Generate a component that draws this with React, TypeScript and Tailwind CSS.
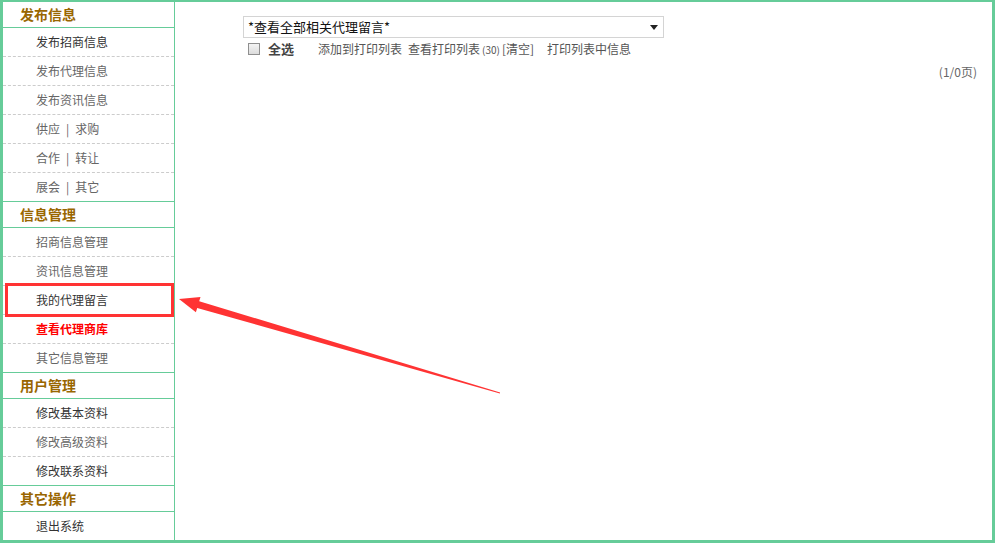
import React from "react";

const font = { fontFamily: '"Noto Sans CJK SC", "Liberation Sans", sans-serif' };

type Item = { label: React.ReactNode; tone: "dark" | "gray" | "red"; boxed?: boolean };
type Section = { title: string; items: Item[] };

const sections: Section[] = [
  {
    title: "发布信息",
    items: [
      { label: "发布招商信息", tone: "dark" },
      { label: "发布代理信息", tone: "gray" },
      { label: "发布资讯信息", tone: "gray" },
      { label: <>供应<span className="mx-[6px]">|</span>求购</>, tone: "gray" },
      { label: <>合作<span className="mx-[6px]">|</span>转让</>, tone: "gray" },
      { label: <>展会<span className="mx-[6px]">|</span>其它</>, tone: "gray" },
    ],
  },
  {
    title: "信息管理",
    items: [
      { label: "招商信息管理", tone: "gray" },
      { label: "资讯信息管理", tone: "gray" },
      { label: "我的代理留言", tone: "dark", boxed: true },
      { label: "查看代理商库", tone: "red" },
      { label: "其它信息管理", tone: "gray" },
    ],
  },
  {
    title: "用户管理",
    items: [
      { label: "修改基本资料", tone: "dark" },
      { label: "修改高级资料", tone: "gray" },
      { label: "修改联系资料", tone: "dark" },
    ],
  },
  {
    title: "其它操作",
    items: [{ label: "退出系统", tone: "dark" }],
  },
];

const toneClass = {
  dark: "text-[#333333]",
  gray: "text-[#666666]",
  red: "text-[#ff0000] font-bold",
};

export default function App() {
  return (
    <div className="relative w-[997px] h-[543px] bg-white overflow-hidden" style={font}>
      <div className="flex w-[995px] h-[543px] border-t-2 border-l-[3px] border-r-[3px] border-b-[3px] border-[#66cc99]">
        <aside className="w-[172px] shrink-0 border-r border-[#66cc99] flex flex-col">
          {sections.map((s, si) => (
            <div key={si} className="flex flex-col">
              <div
                className={`flex items-center pl-[17px] text-[14px] font-bold text-[#996600] border-b border-[#66cc99] ${
                  si > 0 ? "border-t h-[27px]" : "h-[26px]"
                }`}
              >
                {s.title}
              </div>
              {s.items.map((it, ii) => {
                const last = ii === s.items.length - 1;
                return (
                  <div
                    key={ii}
                    className={`relative flex items-center pl-[33px] text-[12px] ${toneClass[it.tone]} ${
                      last ? "h-[28px]" : "h-[29px] border-b border-dashed border-[#cccccc]"
                    }`}
                  >
                    {it.label}
                    {it.boxed && (
                      <div className="absolute left-[2px] top-[-3px] w-[169px] h-[34px] border-[3px] border-[#ff3333]" />
                    )}
                  </div>
                );
              })}
            </div>
          ))}
        </aside>
        <main className="flex-1 flex flex-col pt-[14px] pl-[68px] pr-[15px] text-[12px] text-[#333333]">
          <div className="w-[421px] h-[22px] border border-[#d4d4d4] flex items-center justify-between pl-[4px] pr-[4px] text-[13px] text-[#111111]">
            <span>*查看全部相关代理留言*</span>
            <svg width="8" height="5" viewBox="0 0 8 5" className="mr-[1px]">
              <polygon points="0,0 8,0 4,5" fill="#222" />
            </svg>
          </div>
          <div className="flex items-center h-[20px] mt-[1px] text-[#555555]">
            <span className="ml-[5px] w-[12px] h-[12px] border border-[#8f8f8f] bg-gradient-to-b from-[#f4f4f4] to-[#dcdcdc]" />
            <span className="ml-[8px] text-[13px] font-bold text-[#444444]">全选</span>
            <span className="ml-[24px]">添加到打印列表</span>
            <span className="ml-[6px]">查看打印列表</span>
            <span className="ml-[2px] text-[10px]">(30)</span>
            <span className="ml-[2px]">[清空]</span>
            <span className="ml-[13px]">打印列表中信息</span>
          </div>
          <div className="flex justify-end mt-[4px] text-[#666666] text-[12px]">(1/0页)</div>
        </main>
      </div>
      <svg className="absolute left-0 top-0 pointer-events-none" width="997" height="543">
        <polygon
          points="179,299 200.5,296.9 199.2,301.2 500.1,392.5 499.9,393.5 197.2,308 195.9,312.3"
          fill="#ff3333"
        />
      </svg>
    </div>
  );
}
